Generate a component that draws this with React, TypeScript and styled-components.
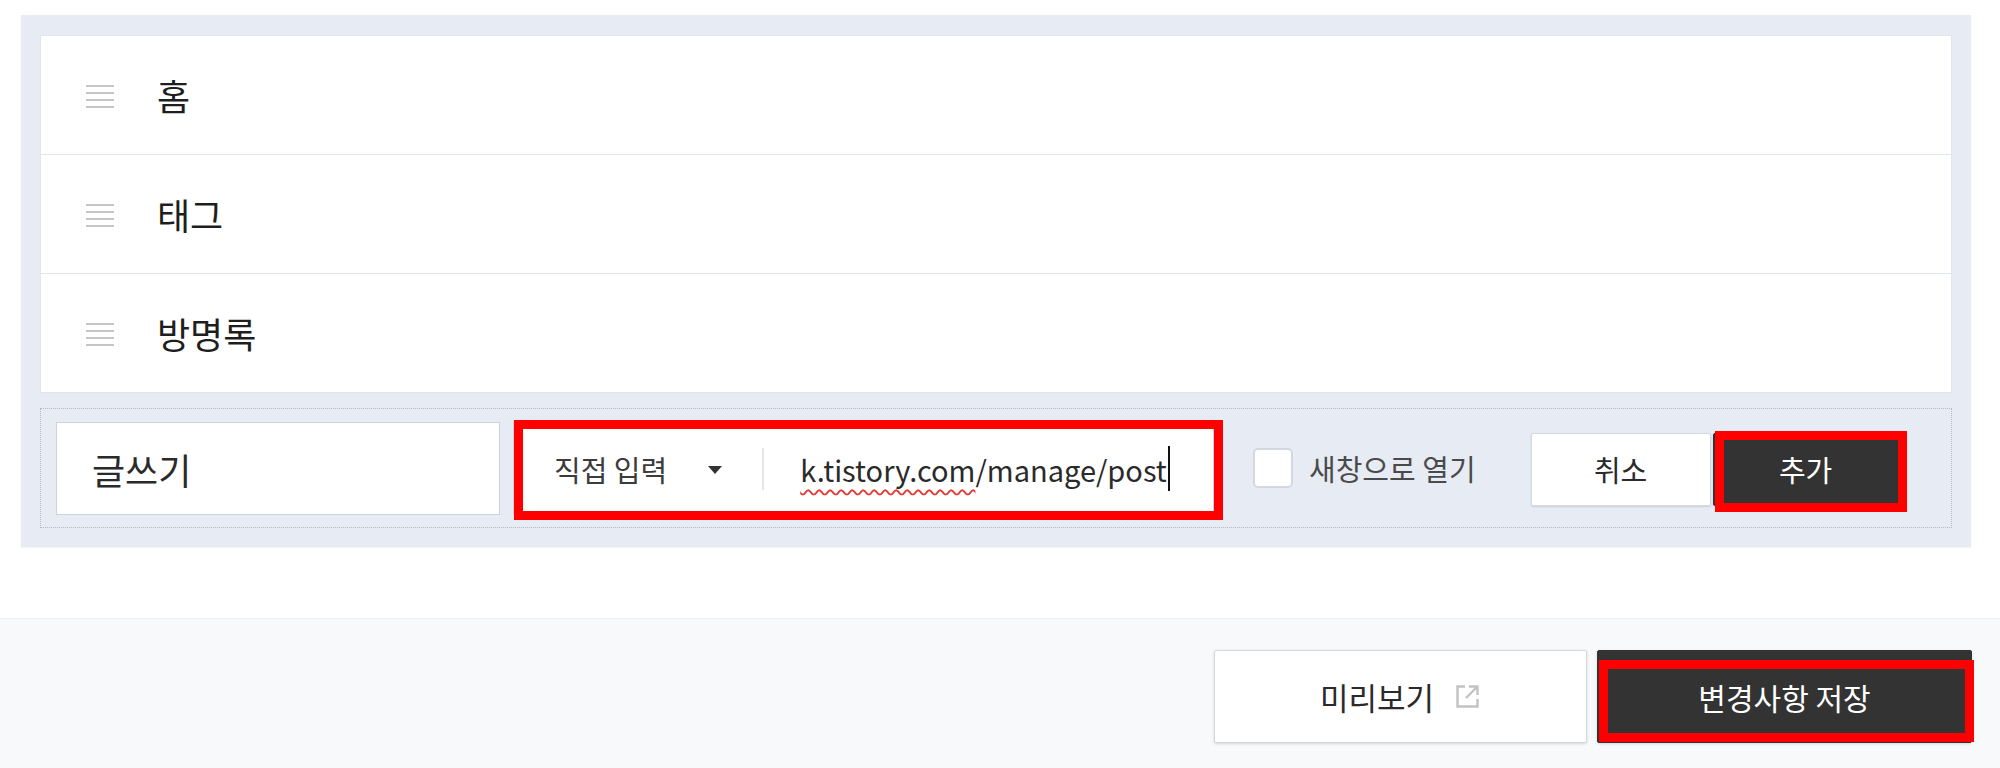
import styled, { createGlobalStyle } from "styled-components";

// 메뉴 목록
const MENU_ITEMS = ["홈", "태그", "방명록"];

const GlobalStyle = createGlobalStyle`
    body {
        margin: 0;
        background-color: #ffffff;
        font-family: "Noto Sans CJK KR", "Noto Sans", sans-serif;
        color: #333333;
    }
`;

/**
 * 드래그 핸들 아이콘
 */
const HandleIcon = () => (
    <svg width="28" height="23" viewBox="0 0 28 23">
        {[1, 8, 15, 22].map(y => (
            <line key={y} x1="0" y1={y} x2="28" y2={y} stroke="#c6c6c6" strokeWidth="2" />
        ))}
    </svg>
);

/**
 * 새창 아이콘
 */
const ExternalIcon = () => (
    <svg width="27" height="27" viewBox="0 0 27 27" fill="none" stroke="#c2c2c2" strokeWidth="2.4">
        <path d="M11 3.5H3.5v20h20V16" />
        <path d="M15 3.5h8.5V12" />
        <path d="M23.5 3.5L12 15" />
    </svg>
);

const App = () => {
    return (
        <>
            <GlobalStyle />
            <Page>
                <Panel>
                    <MenuList>
                        {MENU_ITEMS.map(name => (
                            <MenuRow key={name}>
                                <HandleIcon />
                                <MenuName>{name}</MenuName>
                            </MenuRow>
                        ))}
                    </MenuList>
                    <AddForm>
                        <TitleField>글쓰기</TitleField>
                        <LinkField>
                            <SelectLabel>직접 입력</SelectLabel>
                            <Arrow />
                            <Divider />
                            <UrlText>
                                <Misspelled>k.tistory.com</Misspelled>/manage/post<Caret />
                            </UrlText>
                            <Highlight top={-3} left={0} right={-10} bottom={-6} />
                        </LinkField>
                        <CheckBox />
                        <CheckLabel>새창으로 열기</CheckLabel>
                        <FormButton dark={false}>취소</FormButton>
                        <FormButton dark={true}>
                            추가
                            <Highlight top={-3} left={1} right={-9} bottom={-7} />
                        </FormButton>
                    </AddForm>
                </Panel>
            </Page>
            <Footer>
                <FooterButton dark={false}>
                    미리보기
                    <ExternalIcon />
                </FooterButton>
                <FooterButton dark={true}>
                    변경사항 저장
                    <Highlight top={9} left={1} right={-3} bottom={0} />
                </FooterButton>
            </Footer>
        </>
    );
};

export default App;

// 페이지
const Page = styled.div`
    padding: 15px 29px 0 21px;
`;

// 회색 패널
const Panel = styled.section`
    background-color: #e7ebf3;
    padding: 20px 19px 19px 19px;
    box-shadow: 0 1px 1px rgba(0, 0, 0, 0.04);
`;

// 메뉴 목록
const MenuList = styled.ul`
    margin: 0;
    padding: 0;
    list-style: none;
    background-color: #ffffff;
    border: 1px solid #e0e5ee;
`;

const MenuRow = styled.li`
    display: flex;
    align-items: center;
    gap: 43px;
    height: 118px;
    padding-left: 45px;
    & + & {
        border-top: 1px solid #e0e5ee;
    }
    & svg {
        margin-top: 2px;
    }
`;

const MenuName = styled.span`
    font-size: 36px;
    color: #1e1e1e;
`;

// 메뉴 추가 폼
const AddForm = styled.div`
    display: flex;
    align-items: center;
    margin-top: 15px;
    height: 118px;
    padding: 0 15px;
    border: 1px dotted #b4b8c0;
    white-space: nowrap;
    & > * {
        flex-shrink: 0;
    }
`;

const TitleField = styled.div`
    box-sizing: border-box;
    display: flex;
    align-items: center;
    width: 444px;
    height: 93px;
    padding-left: 35px;
    margin-top: 1px;
    background-color: #ffffff;
    border: 1px solid #cdd3dc;
    font-size: 36px;
    color: #2a2a2a;
`;

const LinkField = styled.div`
    position: relative;
    box-sizing: border-box;
    display: flex;
    align-items: center;
    width: 701px;
    height: 93px;
    margin-left: 13px;
    margin-top: 1px;
    padding-left: 40px;
    background-color: #ffffff;
    border: 1px solid #cdd3dc;
`;

const SelectLabel = styled.span`
    font-size: 29px;
    color: #3c3c3c;
`;

const Arrow = styled.span`
    width: 0;
    height: 0;
    margin-left: 41px;
    margin-top: 2px;
    border-left: 7px solid transparent;
    border-right: 7px solid transparent;
    border-top: 8px solid #333333;
`;

const Divider = styled.span`
    width: 2px;
    height: 42px;
    margin-left: 40px;
    background-color: #e2e6ec;
`;

const UrlText = styled.span`
    display: flex;
    align-items: center;
    margin-left: 36px;
    font-size: 29px;
    color: #2a2a2a;
`;

const Misspelled = styled.span`
    text-decoration: underline wavy #e53935;
    text-decoration-thickness: 1.5px;
    text-underline-offset: 7px;
`;

const Caret = styled.span`
    width: 2px;
    height: 45px;
    margin-left: 1px;
    background-color: #111111;
`;

const CheckBox = styled.span`
    box-sizing: border-box;
    width: 40px;
    height: 40px;
    margin-left: 39px;
    background-color: #ffffff;
    border: 2px solid #d3d8e0;
    border-radius: 5px;
`;

const CheckLabel = styled.span`
    margin-left: 16px;
    font-size: 29px;
    color: #4a4a4a;
`;

const FormButton = styled.button<{
    dark: boolean;
}>`
    position: relative;
    box-sizing: border-box;
    width: ${props => props.dark ? '186px' : '180px'};
    height: 73px;
    margin-left: ${props => props.dark ? '2px' : '55px'};
    margin-top: 2px;
    padding: 0;
    font-family: inherit;
    font-size: 29px;
    color: ${props => props.dark ? '#ffffff' : '#2a2a2a'};
    background-color: ${props => props.dark ? '#333333' : '#ffffff'};
    border: 1px solid ${props => props.dark ? '#333333' : '#d5dae2'};
    border-radius: 2px;
    box-shadow: 0 1px 2px rgba(0, 0, 0, 0.12);
`;

// 빨간 강조 표시
const Highlight = styled.span<{
    top: number;
    left: number;
    right: number;
    bottom: number;
}>`
    position: absolute;
    top: ${props => props.top}px;
    left: ${props => props.left}px;
    right: ${props => props.right}px;
    bottom: ${props => props.bottom}px;
    border: 9px solid #ff0000;
    pointer-events: none;
`;

// 하단 버튼 영역
const Footer = styled.footer`
    display: flex;
    justify-content: flex-end;
    gap: 10px;
    margin-top: 71px;
    padding: 31px 28px 40px 0;
    background-color: #f8f9fb;
    border-top: 1px solid #eceff3;
`;

const FooterButton = styled.button<{
    dark: boolean;
}>`
    position: relative;
    box-sizing: border-box;
    display: flex;
    align-items: center;
    justify-content: center;
    gap: 20px;
    width: ${props => props.dark ? '375px' : '373px'};
    height: 93px;
    padding: 0;
    font-family: inherit;
    font-size: ${props => props.dark ? '30px' : '31px'};
    color: ${props => props.dark ? '#ffffff' : '#2a2a2a'};
    background-color: ${props => props.dark ? '#333333' : '#ffffff'};
    border: 1px solid ${props => props.dark ? '#333333' : '#d3d8e0'};
    border-radius: 2px;
    box-shadow: 0 1px 3px rgba(0, 0, 0, 0.14);
`;
